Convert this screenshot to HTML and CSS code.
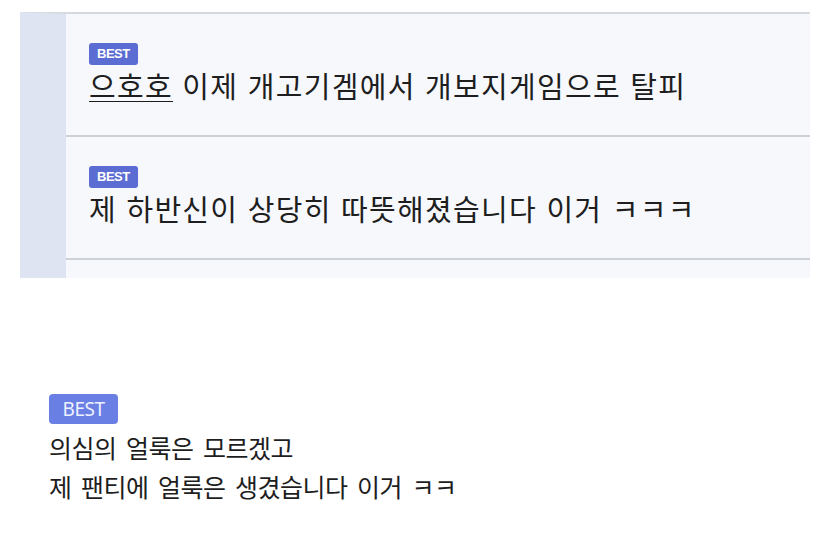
FILE: index.html
```html
<!DOCTYPE html>
<html lang="ko">
<head>
<meta charset="utf-8">
<link rel="stylesheet" href="styles.css">
</head>
<body>
<div class="panel">
  <div class="row">
    <span class="badge">BEST</span>
    <div class="title"><span class="ul">으호호</span> 이제 개고기겜에서 개보지게임으로 탈피</div>
  </div>
  <div class="row">
    <span class="badge">BEST</span>
    <div class="title">제 하반신이 상당히 따뜻해졌습니다 이거 ㅋㅋㅋ</div>
  </div>
  <div class="stub"></div>
</div>
<div class="comment">
  <span class="badge-lg">BEST</span>
  <p class="line">의심의 얼룩은 모르겠고</p>
  <p class="line">제 팬티에 얼룩은 생겼습니다 이거 ㅋㅋ</p>
</div>
</body>
</html>
```
FILE: styles.css
```css
* { box-sizing: border-box; }
body {
  margin: 0;
  background: #ffffff;
  font-family: "Noto Sans CJK KR", "Noto Sans", sans-serif;
  color: #222222;
}
.panel {
  margin: 12px 4px 0 20px;
  background: #f6f8fc;
  border-top: 2px solid #d6d9df;
  border-left: 46px solid #dfe4f2;
}
.row {
  height: 123px;
  padding: 29px 23px 0;
  border-bottom: 2px solid #cdd1d8;
  display: flex;
  flex-direction: column;
  align-items: flex-start;
}
.badge {
  display: inline-block;
  height: 22px;
  padding: 0 8px;
  background: #5b6cd2;
  color: #ffffff;
  font-family: "Liberation Sans", sans-serif;
  font-weight: bold;
  font-size: 13px;
  line-height: 22px;
  border-radius: 3px;
  letter-spacing: -0.5px;
}
.title {
  margin-top: 2px;
  font-size: 29px;
  line-height: 36px;
  letter-spacing: 1.3px;
  color: #1e1e1e;
}
.ul {
  text-decoration: underline;
  text-decoration-thickness: 1px;
  text-underline-offset: 3px;
}
.stub {
  height: 18px;
}
.comment {
  padding: 116px 0 0 49px;
}
.badge-lg {
  display: inline-block;
  width: 69px;
  height: 30px;
  background: #6a7fe3;
  color: #eef1ff;
  font-family: "Noto Sans", sans-serif;
  font-size: 19px;
  line-height: 30px;
  text-align: center;
  border-radius: 4px;
  letter-spacing: -0.5px;
}
.line {
  margin: 0;
  font-size: 25px;
  line-height: 39px;
  letter-spacing: -0.5px;
  word-spacing: 3px;
  color: #1e1e1e;
}
.badge-lg + .line {
  margin-top: 4px;
}
```
